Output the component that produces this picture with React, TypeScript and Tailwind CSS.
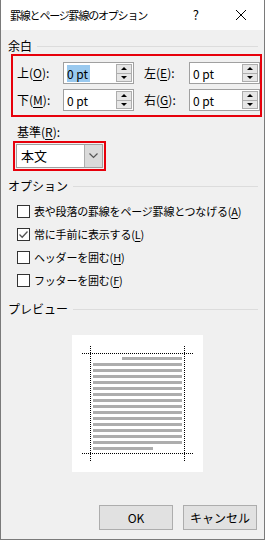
import type { ReactNode } from "react";

const font = { fontFamily: '"Noto Sans CJK JP", "Noto Sans", sans-serif' };

function Underline({ children }: { children: ReactNode }) {
  return <span className="underline underline-offset-2">{children}</span>;
}

function SectionHeader({ title }: { title: string }) {
  return (
    <div className="flex items-center gap-[5px] pl-[7px] pr-[6px]">
      <span className="leading-none">{title}</span>
      <div className="h-px flex-1 bg-[#dcdcdc]" />
    </div>
  );
}

function Spinner() {
  return (
    <div className="my-[-1px] mr-[-1px] flex w-[16px] flex-col border border-[#adadad] bg-[#e6e6e6]">
      <div className="flex flex-1 items-center justify-center border-b border-[#adadad]">
        <div className="h-0 w-0 border-x-[3px] border-b-[3px] border-x-transparent border-b-black" />
      </div>
      <div className="flex flex-1 items-center justify-center">
        <div className="h-0 w-0 border-x-[3px] border-t-[3px] border-x-transparent border-t-black" />
      </div>
    </div>
  );
}

function NumberField({ selected }: { selected?: boolean }) {
  return (
    <div className="flex h-[22px] w-[71px] items-stretch border border-[#a0a0a0] bg-white p-[2px]">
      <div className="flex flex-1 items-center pl-[1px] text-[12px]">
        {selected ? (
          <span className="bg-[#99c9ef] pr-[2px] leading-[17px]">0 pt</span>
        ) : (
          <span className="leading-[17px]">0 pt</span>
        )}
      </div>
      <Spinner />
    </div>
  );
}

function MarginField({
  label,
  letter,
  selected,
  labelWidth,
}: {
  label: string;
  letter: string;
  selected?: boolean;
  labelWidth: string;
}) {
  return (
    <div className="flex items-center">
      <span className={`${labelWidth} text-[12px] leading-none`}>
        {label}(<Underline>{letter}</Underline>):
      </span>
      <NumberField selected={selected} />
    </div>
  );
}

function CheckRow({
  checked,
  children,
}: {
  checked?: boolean;
  children: ReactNode;
}) {
  return (
    <div className="flex h-[23px] items-center gap-[4px] pl-[16px]">
      <div className="flex h-[13px] w-[13px] shrink-0 items-center justify-center border border-[#333] bg-white">
        {checked && (
          <svg width="11" height="11" viewBox="0 0 11 11">
            <path d="M1.5 5.5 L4.2 8.2 L9.5 2.5" fill="none" stroke="#555" strokeWidth="1.3" />
          </svg>
        )}
      </div>
      <span className="whitespace-nowrap text-[11px] leading-none tracking-[-0.2px]">{children}</span>
    </div>
  );
}

function Preview() {
  const bars = Array.from({ length: 16 }, (_, i) => i);
  return (
    <div className="ml-[71px] mt-[20px] h-[137px] w-[131px] bg-white">
      <svg width="131" height="137" viewBox="0 0 131 137">
        {bars.map((i) => {
          const y = 22 + i * 6;
          const x1 = i === 0 ? 50 : 21;
          const x2 = i === 15 ? 81 : 110;
          return <rect key={i} x={x1} y={y} width={x2 - x1} height={3} fill="#adadad" />;
        })}
        <g stroke="#000" strokeWidth="1" strokeDasharray="1 1">
          <line x1="10" y1="18.5" x2="121" y2="18.5" />
          <line x1="10" y1="118.5" x2="121" y2="118.5" />
          <line x1="18.5" y1="11" x2="18.5" y2="126" />
          <line x1="112.5" y1="11" x2="112.5" y2="126" />
        </g>
      </svg>
    </div>
  );
}

export default function App() {
  return (
    <div
      className="flex h-[540px] w-[265px] flex-col border-x border-b border-[#7a7a7a] bg-[#f0f0f0] text-black"
      style={font}
    >
      <div className="flex h-[30px] shrink-0 items-center bg-white">
        <span className="whitespace-nowrap pl-[9px] text-[11px] tracking-[-1.2px]">
          罫線とページ罫線のオプション
        </span>
        <span className="ml-auto mr-[36px] text-[13px]">?</span>
        <svg width="12" height="12" viewBox="0 0 12 12" className="mr-[17px]">
          <path d="M1 1 L11 11 M11 1 L1 11" stroke="#000" strokeWidth="1" />
        </svg>
      </div>

      <div className="flex flex-1 flex-col pt-[10px] text-[12px]">
        <SectionHeader title="余白" />

        <div className="ml-[10px] mt-[2px] flex w-[251px] flex-col gap-[5px] border-2 border-red-600 pb-[4px] pl-[4px] pt-[6px]">
          <div className="flex items-center gap-[10px]">
            <MarginField label="上" letter="O" selected labelWidth="w-[46px]" />
            <MarginField label="左" letter="E" labelWidth="w-[45px]" />
          </div>
          <div className="flex items-center gap-[10px]">
            <MarginField label="下" letter="M" labelWidth="w-[46px]" />
            <MarginField label="右" letter="G" labelWidth="w-[45px]" />
          </div>
        </div>

        <div className="mt-[9px] pl-[16px] leading-none">
          基準(<Underline>R</Underline>):
        </div>

        <div className="ml-[12px] mt-[3px] flex h-[30px] w-[93px] items-stretch border-2 border-red-600 p-[1px]">
          <div className="flex flex-1 items-stretch border border-[#a0a0a0] bg-white">
            <span className="flex flex-1 items-center pl-[4px] text-[13px]">本文</span>
            <div className="flex w-[18px] items-center justify-center border-l border-[#adadad] bg-[#dadada]">
              <svg width="9" height="6" viewBox="0 0 9 6">
                <path d="M0.5 0.5 L4.5 4.5 L8.5 0.5" fill="none" stroke="#555" strokeWidth="1.2" />
              </svg>
            </div>
          </div>
        </div>

        <div className="mt-[9px]">
          <SectionHeader title="オプション" />
        </div>

        <div className="mt-[8px] flex flex-col">
          <CheckRow>
            表や段落の罫線をページ罫線とつなげる(<Underline>A</Underline>)
          </CheckRow>
          <CheckRow checked>
            常に手前に表示する(<Underline>L</Underline>)
          </CheckRow>
          <CheckRow>
            ヘッダーを囲む(<Underline>H</Underline>)
          </CheckRow>
          <CheckRow>
            フッターを囲む(<Underline>F</Underline>)
          </CheckRow>
        </div>

        <div className="mt-[11px]">
          <SectionHeader title="プレビュー" />
        </div>

        <Preview />

        <div className="mt-auto mb-[9px] flex justify-end gap-[10px] pr-[7px]">
          <button className="h-[25px] w-[74px] border border-[#adadad] bg-[#e1e1e1] text-[12px]">
            OK
          </button>
          <button className="h-[25px] w-[74px] border border-[#adadad] bg-[#e1e1e1] text-[12px]">
            キャンセル
          </button>
        </div>
      </div>
    </div>
  );
}
